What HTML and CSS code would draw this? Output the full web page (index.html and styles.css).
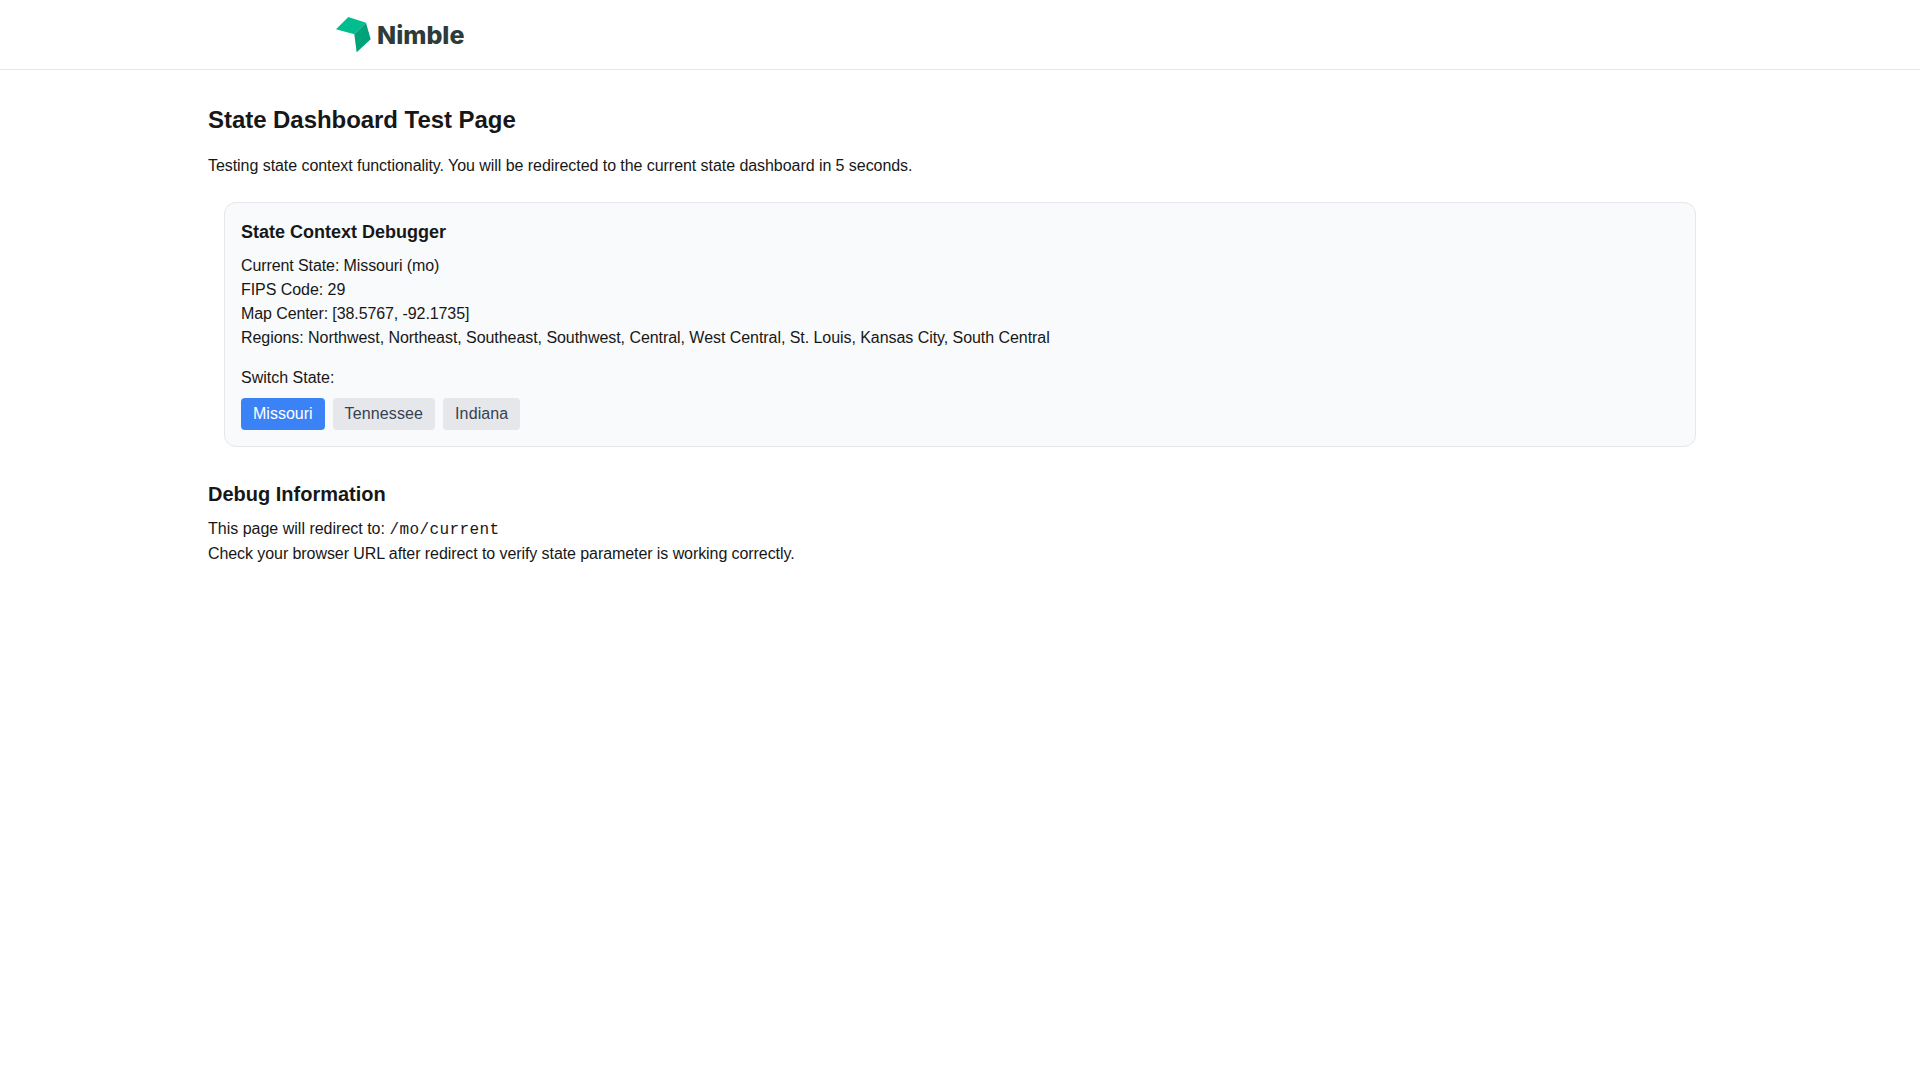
FILE: index.html
```html
<!DOCTYPE html>
<html lang="en">
<head>
<meta charset="utf-8">
<title>State Dashboard Test Page</title>
<link rel="stylesheet" href="styles.css">
</head>
<body>
<header class="site-header">
  <div class="brand">
    <svg class="brand-mark" width="36" height="36" viewBox="0 0 36 36" aria-hidden="true">
      <path d="M0 12.3 L12.3 0 L30 5.7 L18.3 17.3 Z" fill="#00bd8f"/>
      <path d="M30 5.7 L34.7 22.3 L20.7 35.3 L18.3 17.3 Z" fill="#00a27a"/>
    </svg>
    <span class="brand-name">Nimble</span>
  </div>
</header>
<main class="page">
  <h1 class="page-title">State Dashboard Test Page</h1>
  <p class="lead">Testing state context functionality. You will be redirected to the current state dashboard in 5 seconds.</p>
  <section class="debugger">
    <h2 class="debugger-title">State Context Debugger</h2>
    <div class="facts">
      <div class="fact tight">Current State: Missouri (mo)</div>
      <div class="fact">FIPS Code: 29</div>
      <div class="fact tight">Map Center: [38.5767, -92.1735]</div>
      <div class="fact">Regions: Northwest, Northeast, Southeast, Southwest, Central, West Central, St. Louis, Kansas City, South Central</div>
    </div>
    <div class="switch-label">Switch State:</div>
    <div class="switch-buttons">
      <button class="state-btn active" type="button">Missouri</button>
      <button class="state-btn" type="button">Tennessee</button>
      <button class="state-btn" type="button">Indiana</button>
    </div>
  </section>
  <h2 class="section-title">Debug Information</h2>
  <p class="info">This page will redirect to: <code class="route">/mo/current</code></p>
  <p class="info check">Check your browser URL after redirect to verify state parameter is working correctly.</p>
</main>
</body>
</html>
```
FILE: styles.css
```css
* { box-sizing: border-box; }
html, body { margin: 0; padding: 0; }
body {
  background: #fff;
  color: #171717;
  font-family: "Liberation Sans", Arial, sans-serif;
  font-size: 16px;
  line-height: 24px;
}
.site-header {
  height: 70px;
  border-bottom: 1px solid #e5e7eb;
  padding: 17px 0 0 336px;
}
.brand { display: flex; align-items: center; gap: 5px; height: 36px; }
.brand-mark { display: block; flex: none; }
.brand-name {
  font-family: Inter, "Liberation Sans", sans-serif;
  font-size: 25px;
  font-weight: 800;
  line-height: 36px;
  color: #2d3b3a;
}
.page { max-width: 1536px; margin: 0 auto; padding: 32px 16px; }
.page-title { margin: 0 0 16px; font-size: 24px; line-height: 36px; font-weight: 700; letter-spacing: -0.05px; }
.lead { margin: 0 0 24px; letter-spacing: -0.057px; }
.debugger {
  margin: 0 16px 32px;
  padding: 16px;
  background: #f9fafb;
  border: 1px solid #e5e7eb;
  border-radius: 12px;
}
.debugger-title { margin: 0 0 8px; font-size: 18px; line-height: 27px; font-weight: 700; }
.fact { letter-spacing: -0.055px; }
.fact.tight { letter-spacing: -0.095px; }
.switch-label { margin-top: 16px; }
.switch-buttons { display: flex; gap: 8px; margin-top: 8px; }
.state-btn {
  padding: 4px 12px;
  border: 0;
  border-radius: 4px;
  background: #e5e7eb;
  color: #374151;
  font: inherit;
  letter-spacing: 0.12px;
}
.state-btn.active { background: #3b82f6; color: #fff; letter-spacing: 0; }
.section-title { margin: 0 0 8px; font-size: 20px; line-height: 30px; font-weight: 700; }
.info { margin: 0; }
.check { letter-spacing: -0.077px; }
.route { font-family: "Liberation Mono", monospace; font-size: 16px; letter-spacing: 0.4px; }
```
